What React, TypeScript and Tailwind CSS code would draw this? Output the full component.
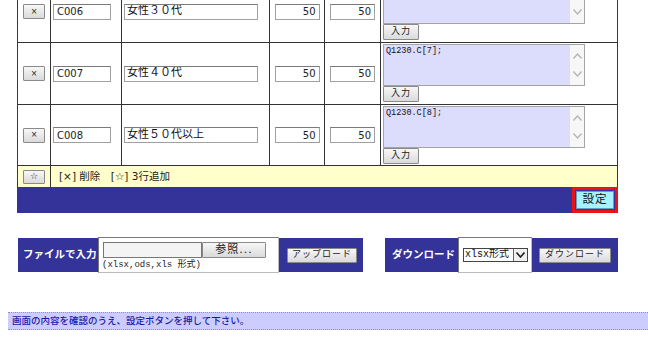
import React from 'react'

const btn =
  'flex items-center justify-center border border-[#8a8a8a] bg-linear-to-b from-[#f7f7f7] to-[#dadada] text-[#222] rounded-[1px]'

function Chevron({ up }: { up?: boolean }) {
  return (
    <svg width="9" height="6" viewBox="0 0 9 6" className="block">
      <path
        d={up ? 'M0.5 5.5 L4.5 1 L8.5 5.5' : 'M0.5 0.5 L4.5 5 L8.5 0.5'}
        fill="none"
        stroke="#b4b4b4"
        strokeWidth="1.3"
      />
    </svg>
  )
}

function ExprBox({ expr }: { expr: string }) {
  return (
    <div className="flex w-[202px] h-[42px] border border-[#a4a4a4] bg-[#dcdcfd]">
      <div className="flex-1 px-[2px] pt-[1px] font-['Liberation_Mono',monospace] text-[8.5px] leading-[11px] text-[#111]">
        {expr}
      </div>
      <div className="w-[14px] bg-[#f7f7f7] flex flex-col items-center justify-center gap-[12px]">
        <Chevron up />
        <Chevron />
      </div>
    </div>
  )
}

function Row({ code, name, expr, rowClass }: { code: string; name: string; expr: string; rowClass: string }) {
  return (
    <div className={rowClass}>
      <div className="w-[33px] border-r border-[#333] flex items-center justify-center">
        <button className={`${btn} w-[22px] h-[15px] text-[8px]`}>×</button>
      </div>
      <div className="w-[71px] border-r border-[#333] flex items-center pl-[2px]">
        <input
          readOnly
          value={code}
          className="w-[58px] h-[16px] border border-[#a0a0a0] border-t-[#7a7a7a] px-[3px] text-[10px] text-[#222] outline-none"
        />
      </div>
      <div className="w-[148px] border-r border-[#333] flex items-center pl-[2px]">
        <input
          readOnly
          value={name}
          className="w-[134px] h-[16px] border border-[#a0a0a0] border-t-[#7a7a7a] px-[2px] text-[11px] text-[#111] outline-none"
        />
      </div>
      <div className="w-[55px] border-r border-[#333] flex items-center justify-center">
        <input
          readOnly
          value="50"
          className="w-[45px] h-[16px] border border-[#a0a0a0] border-t-[#7a7a7a] px-[3px] text-right text-[10px] text-[#222] outline-none"
        />
      </div>
      <div className="w-[56px] border-r border-[#333] flex items-center justify-center">
        <input
          readOnly
          value="50"
          className="w-[45px] h-[16px] border border-[#a0a0a0] border-t-[#7a7a7a] px-[3px] text-right text-[10px] text-[#222] outline-none"
        />
      </div>
      <div className="flex-1 flex flex-col pl-[2px] pt-[1px]">
        <ExprBox expr={expr} />
        <button className={`${btn} w-[36px] h-[16px] text-[9px] tracking-[1px]`}>入力</button>
      </div>
    </div>
  )
}

export default function App() {
  return (
    <div className="w-[648px] h-[356px] overflow-hidden bg-white font-['DejaVu_Sans','Noto_Sans_CJK_JP',sans-serif]">
      {/* list block, scrolled so the first row is cut */}
      <div className="ml-[17px] w-[601px] -mt-[19px] bg-[#2b2b9c] px-[1px]">
        <div className="bg-white">
          <Row code="C006" name="女性３０代" expr="" rowClass="flex h-[62px] border-b border-[#333]" />
          <Row code="C007" name="女性４０代" expr="Q1230.C[7];" rowClass="flex h-[62px] border-b border-[#333]" />
          <Row code="C008" name="女性５０代以上" expr="Q1230.C[8];" rowClass="flex h-[61px] border-b border-[#333]" />
          <div className="flex h-[21px] bg-[#ffffcc]">
            <div className="w-[33px] border-r border-[#333] flex items-center justify-center">
              <button className={`${btn} w-[22px] h-[14px] text-[9px]`}>☆</button>
            </div>
            <div className="flex items-center pl-[8px] text-[10.5px] text-[#222] whitespace-pre">
              [×] 削除　[☆] 3行追加
            </div>
          </div>
        </div>
        <div className="flex justify-end h-[26px] bg-[#333399] -mx-[1px]">
          <div className="w-[46px] h-full border-[3px] border-[#e8141c] p-[1px]">
            <button className="w-full h-full bg-[#a6f2ff] border border-[#5aa0c8] text-[11.5px] text-[#111] tracking-[1px] flex items-center justify-center">
              設定
            </button>
          </div>
        </div>
      </div>

      {/* file upload / download */}
      <div className="flex mt-[25px] ml-[18px]">
        <div className="flex items-center w-[345px] h-[34px] bg-[#333399]">
          <div className="w-[80px] pl-[5px] text-[10.5px] font-bold text-white">ファイルで入力</div>
          <div className="w-[181px] h-[36px] -my-[1px] bg-white border border-[#777] border-r-[#bbb] border-b-[#bbb] pl-[4px] pt-[4px]">
            <div className="flex">
              <div className="w-[99px] h-[16px] border border-[#777] bg-[#f4f4f4]" />
              <button className={`${btn} w-[64px] h-[16px] text-[11px] tracking-[1px]`}>参照...</button>
            </div>
            <div className="mt-[2px] -ml-[1px] font-['Liberation_Mono','Noto_Sans_CJK_JP',monospace] text-[9px] leading-[11px] text-[#222]">
              (xlsx,ods,xls 形式)
            </div>
          </div>
          <button className={`${btn} ml-[8px] w-[70px] h-[15px] text-[9px] tracking-[1px]`}>アップロード</button>
        </div>

        <div className="flex items-center ml-[22px] w-[233px] h-[34px] bg-[#333399]">
          <div className="w-[73px] pl-[7px] text-[10.5px] font-bold text-white">ダウンロード</div>
          <div className="w-[74px] h-[36px] -my-[1px] bg-white border border-[#777] border-r-[#bbb] border-b-[#bbb] flex items-center pl-[4px]">
            <div className="flex items-center w-[65px] h-[14px] border border-[#444]">
              <div className="flex-1 pl-[1px] font-['Liberation_Mono','Noto_Sans_CJK_JP',monospace] text-[10px] leading-[12px] text-[#111]">
                xlsx形式
              </div>
              <div className="w-[14px] h-[12px] border-l border-[#666] flex items-center justify-center bg-[#f0f0f0]">
                <svg width="9" height="6" viewBox="0 0 9 6">
                  <path d="M0.5 0.5 L4.5 5 L8.5 0.5" fill="none" stroke="#222" strokeWidth="1.6" />
                </svg>
              </div>
            </div>
          </div>
          <button className={`${btn} ml-[7px] w-[72px] h-[15px] text-[9px] tracking-[1px]`}>ダウンロード</button>
        </div>
      </div>

      {/* message */}
      <div className="mt-[40px] ml-[8px] h-[18px] bg-[#ccccff] border-y border-dotted border-[#8e8ed6] flex items-center pl-[4px] text-[9.5px] font-medium text-[#1a1aa8]">
        画面の内容を確認のうえ、設定ボタンを押して下さい。
      </div>
    </div>
  )
}
